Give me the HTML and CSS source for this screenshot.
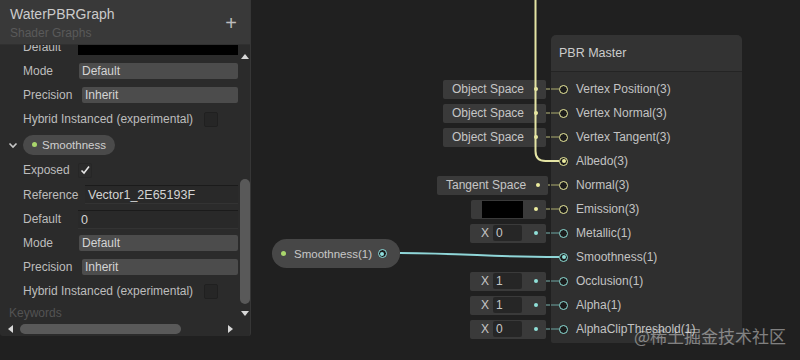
FILE: index.html
```html
<!DOCTYPE html>
<html lang="en">
<head>
    <meta charset="UTF-8">
    <title>WaterPBRGraph</title>
    <link rel="stylesheet" href="styles.css">
</head>
<body>
    <div class="canvas">

        <!-- Blackboard -->
        <aside class="blackboard">
            <header class="bb-head">
                <div>
                    <div class="bb-title">WaterPBRGraph</div>
                    <div class="bb-sub">Shader Graphs</div>
                </div>
                <span class="bb-add">+</span>
            </header>
            <div class="bb-main">
                <div class="bb-list">
                    <div class="bb-content">
                        <div class="bb-row"><span class="lbl w55">Default</span><span class="field swatch"></span></div>
                        <div class="bb-row"><span class="lbl w56">Mode</span><span class="field drop">Default</span></div>
                        <div class="bb-row"><span class="lbl w59">Precision</span><span class="field drop">Inherit</span></div>
                        <div class="bb-row"><span class="lbl">Hybrid Instanced (experimental)</span><span class="checkbox"></span></div>

                        <div class="bb-prop">
                            <svg class="chevron" width="10" height="8" viewBox="0 0 10 8"><path d="M1.5 2.5 L5 6 L8.5 2.5" fill="none" stroke="#c8c8c8" stroke-width="1.6"/></svg>
                            <span class="pill"><i class="dot green"></i>Smoothness</span>
                        </div>
                        <div class="bb-row"><span class="lbl w55">Exposed</span>
                            <span class="checkbox checked"><svg width="12" height="12" viewBox="0 0 12 12"><path d="M2.5 6.5 L5 9 L10 2.5" fill="none" stroke="#e6e6e6" stroke-width="1.6"/></svg></span>
                        </div>
                        <div class="bb-row tall"><span class="lbl w62">Reference</span><span class="field text">Vector1_2E65193F</span></div>
                        <div class="bb-row"><span class="lbl w55">Default</span><span class="field text">0</span></div>
                        <div class="bb-row"><span class="lbl w56">Mode</span><span class="field drop">Default</span></div>
                        <div class="bb-row"><span class="lbl w59">Precision</span><span class="field drop">Inherit</span></div>
                        <div class="bb-row"><span class="lbl">Hybrid Instanced (experimental)</span><span class="checkbox"></span></div>
                        <div class="bb-section">Keywords</div>
                    </div>
                </div>
                <div class="vscroll">
                    <span class="arrow up"></span>
                    <span class="vthumb"></span>
                    <span class="arrow down"></span>
                </div>
            </div>
            <div class="hscroll">
                <span class="arrow left"></span>
                <span class="hthumb"></span>
                <span class="arrow right"></span>
            </div>
        </aside>

        <!-- Property node -->
        <div class="prop-node">
            <i class="dot green"></i>
            <span class="prop-label">Smoothness(1)</span>
            <span class="port v1 linked"></span>
        </div>

        <!-- Master node -->
        <div class="master">
            <div class="m-head">PBR Master</div>
            <div class="m-gap"></div>

            <div class="m-row v3">
                <div class="m-in"><span class="in-box">Object Space<i class="in-dot"></i></span><span class="stub"></span></div>
                <div class="m-port"><span class="pline"></span><span class="port"></span><span class="plabel">Vertex Position(3)</span></div>
            </div>
            <div class="m-row v3">
                <div class="m-in"><span class="in-box">Object Space<i class="in-dot"></i></span><span class="stub"></span></div>
                <div class="m-port"><span class="pline"></span><span class="port"></span><span class="plabel">Vertex Normal(3)</span></div>
            </div>
            <div class="m-row v3">
                <div class="m-in"><span class="in-box">Object Space<i class="in-dot"></i></span><span class="stub"></span></div>
                <div class="m-port"><span class="pline"></span><span class="port"></span><span class="plabel">Vertex Tangent(3)</span></div>
            </div>
            <div class="m-row v3">
                <div class="m-in"></div>
                <div class="m-port"><span class="pline none"></span><span class="port linked"></span><span class="plabel">Albedo(3)</span></div>
            </div>
            <div class="m-row v3">
                <div class="m-in"><span class="in-box">Tangent Space<i class="in-dot"></i></span><span class="stub"></span></div>
                <div class="m-port"><span class="pline"></span><span class="port"></span><span class="plabel">Normal(3)</span></div>
            </div>
            <div class="m-row v3">
                <div class="m-in"><span class="in-box color"><span class="in-swatch"></span><i class="in-dot"></i></span><span class="stub"></span></div>
                <div class="m-port"><span class="pline"></span><span class="port"></span><span class="plabel">Emission(3)</span></div>
            </div>
            <div class="m-row v1">
                <div class="m-in"><span class="in-box num">X<span class="in-field">0</span><i class="in-dot"></i></span><span class="stub"></span></div>
                <div class="m-port"><span class="pline"></span><span class="port"></span><span class="plabel">Metallic(1)</span></div>
            </div>
            <div class="m-row v1">
                <div class="m-in"></div>
                <div class="m-port"><span class="pline none"></span><span class="port linked"></span><span class="plabel">Smoothness(1)</span></div>
            </div>
            <div class="m-row v1">
                <div class="m-in"><span class="in-box num">X<span class="in-field">1</span><i class="in-dot"></i></span><span class="stub"></span></div>
                <div class="m-port"><span class="pline"></span><span class="port"></span><span class="plabel">Occlusion(1)</span></div>
            </div>
            <div class="m-row v1">
                <div class="m-in"><span class="in-box num">X<span class="in-field">1</span><i class="in-dot"></i></span><span class="stub"></span></div>
                <div class="m-port"><span class="pline"></span><span class="port"></span><span class="plabel">Alpha(1)</span></div>
            </div>
            <div class="m-row v1">
                <div class="m-in"><span class="in-box num">X<span class="in-field">0</span><i class="in-dot"></i></span><span class="stub"></span></div>
                <div class="m-port"><span class="pline"></span><span class="port"></span><span class="plabel">AlphaClipThreshold(1)</span></div>
            </div>
            <div class="m-foot"></div>
        </div>

        <!-- Edges -->
        <svg class="wires" width="800" height="360" viewBox="0 0 800 360">
            <path d="M535.5 0 V151 Q535.5 161 545.5 161 H559" fill="none" stroke="#e4e4a4" stroke-width="2"/>
            <path d="M400 253 C 470 253.5, 490 257, 559 257" fill="none" stroke="#8fd6d8" stroke-width="2"/>
        </svg>

        <div class="watermark">@稀土掘金技术社区</div>
    </div>
</body>
</html>
```

FILE: styles.css
```css
body {
    margin: 0;
    padding: 0;
    background-color: #202020;
    font-family: "Liberation Sans", Arial, sans-serif;
    font-size: 12px;
    color: #c4c4c4;
}

.canvas {
    position: relative;
    width: 800px;
    height: 360px;
    overflow: hidden;
    background-color: #202020;
}

/* ---------- blackboard ---------- */

.blackboard {
    position: absolute;
    left: 0;
    top: 0;
    width: 250px;
    height: 336px;
    display: flex;
    flex-direction: column;
    background-color: #2b2b2b;
    border-right: 1px solid #363636;
    border-radius: 0 0 3px 3px;
}

.bb-head {
    height: 45px;
    flex-shrink: 0;
    display: flex;
    justify-content: space-between;
    align-items: flex-start;
    padding: 0 10px;
    background-color: #393939;
    border-bottom: 1px solid #303030;
    box-sizing: border-box;
}

.bb-title {
    margin-top: 5px;
    font-size: 14px;
    line-height: 18px;
    color: #cbcbcb;
}

.bb-sub {
    margin-top: 3px;
    font-size: 12px;
    line-height: 14px;
    color: #5a5a5a;
}

.bb-add {
    margin-top: 13px;
    margin-right: 3px;
    font-size: 20px;
    line-height: 20px;
    color: #bdbdbd;
}

.bb-main {
    flex: 1;
    display: flex;
    min-height: 0;
}

.bb-list {
    width: 240px;
    overflow: hidden;
}

.bb-content {
    margin-top: -10px;
}

.bb-row {
    height: 24px;
    display: flex;
    align-items: center;
    padding-left: 23px;
    padding-right: 2px;
}

.bb-row.tall {
    height: 25px;
}

.lbl {
    flex-shrink: 0;
    color: #bdbdbd;
    white-space: nowrap;
}

.w55 { width: 55px; }
.w56 { width: 56px; }
.w59 { width: 59px; }
.w62 { width: 62px; }

.field {
    flex: 1;
    height: 16px;
    line-height: 16px;
    padding-left: 3px;
    color: #d4d4d4;
    box-sizing: border-box;
}

.field.swatch {
    background-color: #000;
}

.field.drop {
    background-color: #4c4c4c;
    border-radius: 2px;
}

.field.text {
    height: 19px;
    line-height: 18px;
    font-size: 12.5px;
    background-color: #292929;
    border-top: 1px solid #1b1b1b;
    border-bottom: 1px solid #333;
}

.checkbox {
    width: 12px;
    height: 13px;
    margin-left: 11px;
    background-color: #262626;
    border: 1px solid #202020;
    border-radius: 2px;
    display: flex;
    align-items: center;
    justify-content: center;
}

.checkbox.checked {
    margin-left: 0;
    background-color: #2b2b2b;
    border-color: #262626;
}

.bb-prop {
    height: 27px;
    display: flex;
    align-items: center;
    padding-left: 8px;
}

.chevron {
    margin-right: 5px;
}

.pill {
    display: flex;
    align-items: center;
    height: 20px;
    padding: 0 9px 0 9px;
    background-color: #4a4a4a;
    border-radius: 10px;
    font-size: 11.5px;
    color: #d0d0d0;
    white-space: nowrap;
}

.dot {
    display: inline-block;
    width: 5px;
    height: 5px;
    border-radius: 50%;
}

.dot.green {
    background-color: #a9d66c;
}

.pill .dot {
    margin-right: 5px;
}

.bb-section {
    height: 19px;
    line-height: 21px;
    padding-left: 9px;
    color: #535353;
}

.vscroll {
    width: 10px;
    display: flex;
    flex-direction: column;
    align-items: center;
}

.vthumb {
    width: 10px;
    height: 125px;
    margin-top: 120px;
    background-color: #595959;
    border-radius: 5px;
}

.arrow {
    width: 0;
    height: 0;
    border: 4px solid transparent;
}

.arrow.up {
    margin-top: 9px;
    border-top: 0;
    border-bottom: 5px solid #d8d8d8;
}

.arrow.down {
    margin-top: 7px;
    border-bottom: 0;
    border-top: 5px solid #d8d8d8;
}

.hscroll {
    height: 14px;
    flex-shrink: 0;
    display: flex;
    align-items: center;
    padding-left: 8px;
}

.arrow.left {
    border-left: 0;
    border-right: 5px solid #d8d8d8;
}

.arrow.right {
    margin-left: 47px;
    border-right: 0;
    border-left: 5px solid #d8d8d8;
}

.hthumb {
    width: 161px;
    height: 10px;
    margin-left: 7px;
    background-color: #595959;
    border-radius: 5px;
}

/* ---------- property node ---------- */

.prop-node {
    position: absolute;
    left: 272px;
    top: 239px;
    width: 128px;
    height: 29px;
    display: flex;
    align-items: center;
    padding-left: 9px;
    box-sizing: border-box;
    background-color: #474747;
    border-radius: 15px;
}

.prop-label {
    margin-left: 8px;
    font-size: 11.5px;
    color: #c8c8c8;
    white-space: nowrap;
}

.prop-node .port {
    margin-left: 6px;
}

/* ---------- master node ---------- */

.master {
    position: absolute;
    left: 437px;
    top: 35px;
    width: 305px;
}

.m-head {
    margin-left: 114px;
    height: 36px;
    line-height: 36px;
    padding-left: 8px;
    font-size: 12.5px;
    color: #cccccc;
    background-color: #333333;
    border-bottom: 1px solid #242424;
    border-radius: 5px 5px 0 0;
}

.m-gap {
    margin-left: 114px;
    height: 5px;
    background-color: #2f2f2f;
}

.m-foot {
    margin-left: 114px;
    height: 2px;
    background-color: #2f2f2f;
    border-radius: 0 0 5px 5px;
}

.m-row {
    display: grid;
    grid-template-columns: 114px 191px;
    height: 24px;
}

.m-in {
    display: flex;
    justify-content: flex-end;
    align-items: center;
}

.in-box {
    display: flex;
    align-items: center;
    height: 19px;
    padding: 0 8px 0 9px;
    background-color: #3a3a3a;
    border-radius: 2px;
    color: #c6c6c6;
    white-space: nowrap;
    box-sizing: border-box;
}

.in-box.color {
    width: 75px;
    padding-left: 11px;
}

.in-box.num {
    width: 76px;
    padding-left: 11px;
}

.in-swatch {
    width: 41px;
    height: 17px;
    background-color: #000;
}

.in-field {
    width: 29px;
    height: 16px;
    line-height: 16px;
    margin-left: 4px;
    padding-left: 3px;
    box-sizing: border-box;
    background-color: #262626;
    border-radius: 2px;
}

.in-dot {
    width: 4px;
    height: 4px;
    margin-left: auto;
    border-radius: 50%;
    flex-shrink: 0;
}

.in-box:not(.color):not(.num) .in-dot {
    margin-left: 10px;
}

.stub {
    width: 4px;
    height: 2px;
    margin-right: 1px;
}

.m-port {
    display: flex;
    align-items: center;
    background-color: #2f2f2f;
}

.pline {
    width: 8px;
    height: 2px;
}

.pline.none {
    background-color: transparent !important;
}

.port {
    width: 9px;
    height: 9px;
    border-radius: 50%;
    box-sizing: border-box;
    border: 1.5px solid;
    background-color: #1c1c1c;
    display: flex;
    align-items: center;
    justify-content: center;
    flex-shrink: 0;
}

.port.linked::after {
    content: "";
    width: 4px;
    height: 4px;
    border-radius: 50%;
}

.plabel {
    margin-left: 8px;
    color: #c3c3c3;
    white-space: nowrap;
}

.v3 .in-dot, .v3 .port.linked::after { background-color: #ecec9e; }
.v3 .port { border-color: #ecec9e; }
.v3 .stub, .v3 .pline { background-color: #6d6d4e; }

.v1 .in-dot, .v1 .port.linked::after { background-color: #8fe0d8; }
.v1 .port { border-color: #8fe0d8; }
.v1 .stub, .v1 .pline { background-color: #4d6a68; }

.prop-node .port { border-color: #8fe0e0; }
.prop-node .port.linked::after { background-color: #8fe0e0; }

/* ---------- wires + watermark ---------- */

.wires {
    position: absolute;
    left: 0;
    top: 0;
    pointer-events: none;
}

.watermark {
    position: absolute;
    right: 14px;
    bottom: 12px;
    font-family: "Noto Sans CJK SC", sans-serif;
    font-size: 17px;
    color: rgba(225, 225, 225, 0.5);
}
```
